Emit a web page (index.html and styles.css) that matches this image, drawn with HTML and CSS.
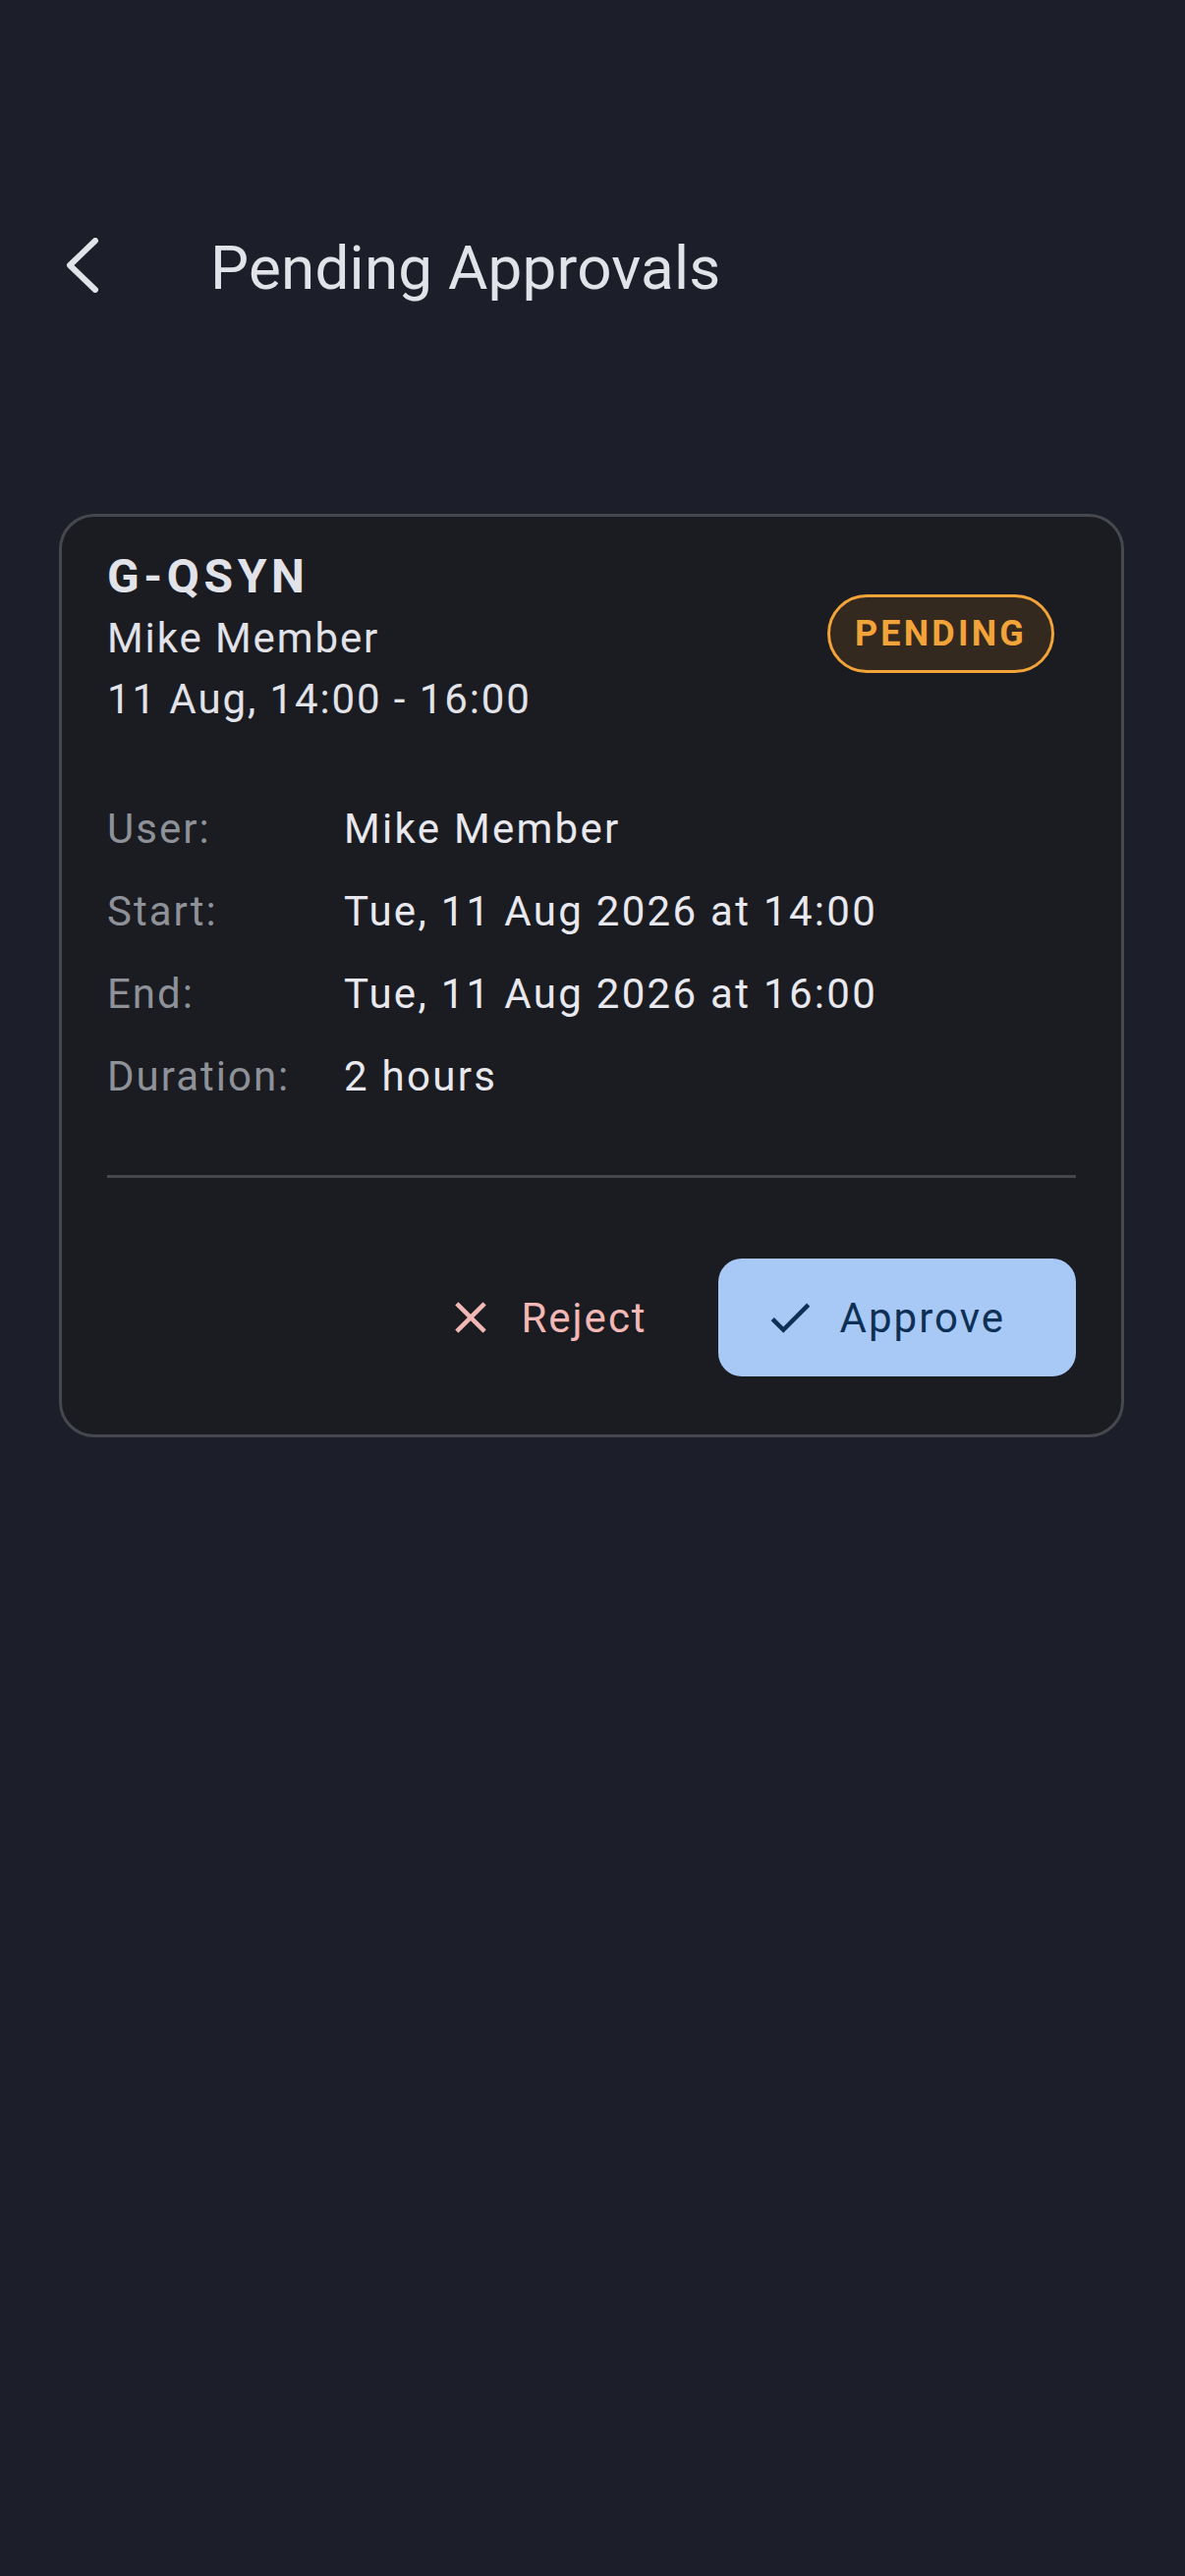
FILE: index.html
```html
<!DOCTYPE html>
<html>
<head>
    <meta charset="UTF-8">
    <title>Pending Approvals</title>
    <link rel="stylesheet" href="styles.css">
</head>
<body>
    <div class="topbar">
        <a href="javascript:;" class="back">
            <svg width="40" height="56" viewBox="0 0 40 56"><polyline points="33,3 7,28 33,53" fill="none" stroke="#e2e2e9" stroke-width="6" stroke-linecap="round" stroke-linejoin="round"/></svg>
        </a>
        <h1 class="title">Pending Approvals</h1>
    </div>

    <div class="card">
        <div class="card-head">
            <div class="head-text">
                <div class="reg">G-QSYN</div>
                <div class="sub">Mike Member</div>
                <div class="sub">11 Aug, 14:00 - 16:00</div>
            </div>
            <span class="badge">PENDING</span>
        </div>

        <div class="details">
            <div class="row"><span class="label">User:</span><span class="value">Mike Member</span></div>
            <div class="row"><span class="label">Start:</span><span class="value">Tue, 11 Aug 2026 at 14:00</span></div>
            <div class="row"><span class="label">End:</span><span class="value">Tue, 11 Aug 2026 at 16:00</span></div>
            <div class="row"><span class="label">Duration:</span><span class="value">2 hours</span></div>
        </div>

        <div class="divider"></div>

        <div class="actions">
            <a href="javascript:;" class="btn btn-reject">
                <svg width="54" height="54" viewBox="0 0 24 24"><path d="M19 6.41L17.59 5 12 10.59 6.41 5 5 6.41 10.59 12 5 17.59 6.41 19 12 13.41 17.59 19 19 17.59 13.41 12z" fill="#f2b8b5"/></svg>
                <span>Reject</span>
            </a>
            <a href="javascript:;" class="btn btn-approve">
                <svg width="54" height="54" viewBox="0 0 24 24"><path d="M9 16.17L4.83 12l-1.42 1.41L9 19 21 7l-1.41-1.41z" fill="#0e3055"/></svg>
                <span>Approve</span>
            </a>
        </div>
    </div>
</body>
</html>
```

FILE: styles.css
```css
* {
    margin: 0;
    padding: 0;
    box-sizing: border-box;
}
body {
    background: #1c1f2a;
    font-family: Roboto, "Noto Sans", sans-serif;
    color: #e2e2e9;
    min-height: 2622px;
}
a { text-decoration: none; color: inherit; }

.topbar {
    display: flex;
    align-items: center;
    height: 80px;
    margin-top: 233px;
}
.back {
    display: flex;
    margin-left: 64px;
    margin-bottom: 6px;
}
.title {
    margin-left: 110px;
    font-size: 62px;
    font-weight: 400;
    line-height: 80px;
    color: #e2e2e9;
    letter-spacing: 0.2px;
}

.card {
    margin: 210px 62px 0 60px;
    background: #1a1c21;
    border: 3px solid #46484e;
    border-radius: 36px;
    padding: 29px 46px 59px 46px;
}
.card-head {
    display: flex;
    justify-content: space-between;
    align-items: flex-start;
}
.reg {
    font-size: 48px;
    font-weight: 700;
    line-height: 64px;
    letter-spacing: 4.6px;
    color: #e2e2e9;
}
.sub {
    font-size: 42px;
    line-height: 62px;
    letter-spacing: 1.9px;
    color: #e2e2e9;
}
.badge {
    margin-top: 50px;
    margin-right: 22px;
    height: 80px;
    padding: 0 25px 0 25px;
    display: inline-flex;
    align-items: center;
    border: 3px solid #f2a33a;
    border-radius: 40px;
    background: #33291f;
    color: #f2a33a;
    font-size: 36px;
    font-weight: 700;
    letter-spacing: 3.2px;
}

.details {
    margin-top: 59px;
}
.row {
    display: flex;
    font-size: 42px;
    line-height: 84px;
}
.label {
    width: 241px;
    color: #8f9199;
    letter-spacing: 2px;
}
.value {
    color: #e8e8ee;
    font-weight: 400;
    letter-spacing: 2.3px;
}

.divider {
    height: 3px;
    background: #45474d;
    margin-top: 58px;
}

.actions {
    display: flex;
    justify-content: flex-end;
    gap: 24px;
    margin-top: 82px;
}
.btn {
    display: flex;
    align-items: center;
    height: 120px;
    border-radius: 24px;
    font-size: 42px;
    font-weight: 400;
    letter-spacing: 2px;
}
.btn svg { margin-right: 24px; }
.btn-reject {
    color: #f2b8b5;
    padding: 0 48px 0 36px;
}
.btn-approve {
    background: #a8c9f6;
    color: #0e3055;
    padding: 0 72px 0 46px;
}
```
